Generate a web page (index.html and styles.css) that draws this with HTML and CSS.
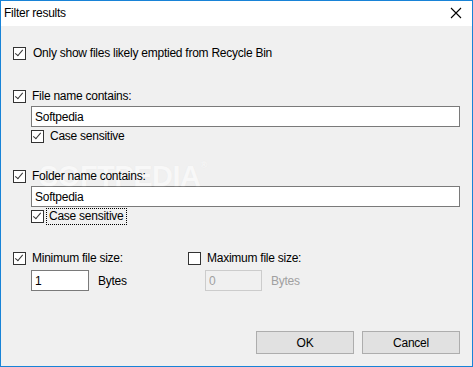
FILE: index.html
```html
<!DOCTYPE html>
<html lang="en">
  <head>
    <meta charset="UTF-8" />
    <meta name="viewport" content="width=device-width, initial-scale=1.0" />
    <title>Filter results</title>
    <link rel="stylesheet" href="styles.css">
  </head>
  <body>
    <div class="window">
      <div class="titlebar">
        <span class="title">Filter results</span>
        <svg class="close" width="12" height="12" viewBox="0 0 12 12">
          <path d="M1 1 L11 11 M11 1 L1 11" stroke="#000" stroke-width="1.1" fill="none" />
        </svg>
      </div>
      <div class="content">
        <span class="watermark">SOFTPEDIA<sup>®</sup></span>

        <label class="check-row row-recycle">
          <span class="box checked"></span>
          <span>Only show files likely emptied from Recycle Bin</span>
        </label>

        <label class="check-row row-file">
          <span class="box checked"></span>
          <span>File name contains:</span>
        </label>
        <input class="text-input" type="text" value="Softpedia" />
        <label class="check-row sub-row">
          <span class="box checked"></span>
          <span>Case sensitive</span>
        </label>

        <label class="check-row row-folder">
          <span class="box checked"></span>
          <span>Folder name contains:</span>
        </label>
        <input class="text-input" type="text" value="Softpedia" />
        <label class="check-row sub-row">
          <span class="box checked"></span>
          <span class="focused">Case sensitive</span>
        </label>

        <div class="size-row">
          <div class="size-col">
            <label class="check-row">
              <span class="box checked"></span>
              <span>Minimum file size:</span>
            </label>
            <div class="size-input">
              <input class="num-input" type="text" value="1" />
              <span>Bytes</span>
            </div>
          </div>
          <div class="size-col disabled">
            <label class="check-row">
              <span class="box"></span>
              <span>Maximum file size:</span>
            </label>
            <div class="size-input">
              <input class="num-input" type="text" value="0" disabled />
              <span>Bytes</span>
            </div>
          </div>
        </div>

        <div class="buttons">
          <button class="btn">OK</button>
          <button class="btn">Cancel</button>
        </div>
      </div>
    </div>
  </body>
</html>
```

FILE: styles.css
```css
body {
  margin: 0;
  padding: 0;
  font-family: "Liberation Sans", Arial, sans-serif;
  font-size: 12px;
  letter-spacing: -0.25px;
  color: #000;
}
.window {
  width: 473px;
  height: 367px;
  box-sizing: border-box;
  border: 1px solid #1883d7;
  display: flex;
  flex-direction: column;
}
.titlebar {
  height: 25px;
  background-color: #fff;
  display: flex;
  align-items: center;
  justify-content: space-between;
  padding: 0 10px 0 3px;
}
.title {
  font-size: 12px;
  margin-top: -2px;
}
.close {
  margin-top: -2px;
}
.content {
  position: relative;
  flex: 1;
  background-color: #f0f0f0;
  padding: 0 12px;
  display: flex;
  flex-direction: column;
}
.watermark {
  position: absolute;
  left: 38px;
  top: 134px;
  font-size: 29px;
  font-weight: bold;
  letter-spacing: -0.5px;
  color: #f8f8f8;
  text-shadow: 0 0 1px #e6e6e6;
  pointer-events: none;
}
.watermark sup {
  font-size: 9px;
  vertical-align: top;
}
.check-row {
  display: flex;
  align-items: center;
  gap: 6px;
  height: 13px;
  line-height: 13px;
  position: relative;
}
.box {
  width: 13px;
  height: 13px;
  box-sizing: border-box;
  border: 1px solid #333;
  background-color: #fff;
  flex-shrink: 0;
  position: relative;
}
.box.checked::after {
  content: "";
  position: absolute;
  left: 3px;
  top: 0px;
  width: 3px;
  height: 7px;
  border-right: 1.4px solid #333;
  border-bottom: 1.4px solid #333;
  transform: rotate(40deg);
}
.row-recycle {
  margin-top: 21px;
  gap: 7px;
}
.row-file {
  margin-top: 30px;
}
.row-folder {
  margin-top: 27px;
}
.text-input {
  margin: 3px 0 0 18px;
  height: 21px;
  box-sizing: border-box;
  border: 1px solid #7a7a7a;
  background: #fff;
  font-family: inherit;
  font-size: 12px;
  letter-spacing: -0.25px;
  padding: 0 3px;
  outline: none;
}
.sub-row {
  margin: 3px 0 0 18px;
}
.focused {
  outline: 1px dotted #000;
  outline-offset: 1px;
  padding: 0 1px;
  margin-left: -2px;
}
.size-row {
  display: flex;
  margin-top: 29px;
}
.size-col {
  width: 175px;
  display: flex;
  flex-direction: column;
}
.size-input {
  display: flex;
  align-items: center;
  gap: 9px;
  margin: 5px 0 0 18px;
}
.num-input {
  width: 58px;
  height: 21px;
  box-sizing: border-box;
  border: 1px solid #7a7a7a;
  background: #fff;
  font-family: inherit;
  font-size: 12px;
  padding: 0 3px;
  outline: none;
}
.disabled .num-input {
  width: 57px;
  border-color: #ccc;
  background: #f0f0f0;
  color: #a0a0a0;
  margin-left: -1px;
}
.disabled .size-input span {
  color: #a0a0a0;
}
.buttons {
  display: flex;
  justify-content: flex-end;
  gap: 8px;
  margin-top: 40px;
}
.btn {
  width: 98px;
  height: 23px;
  border: 1px solid #adadad;
  background-color: #e1e1e1;
  font-family: inherit;
  font-size: 12px;
  letter-spacing: -0.25px;
  color: #000;
  padding: 0;
}
```
